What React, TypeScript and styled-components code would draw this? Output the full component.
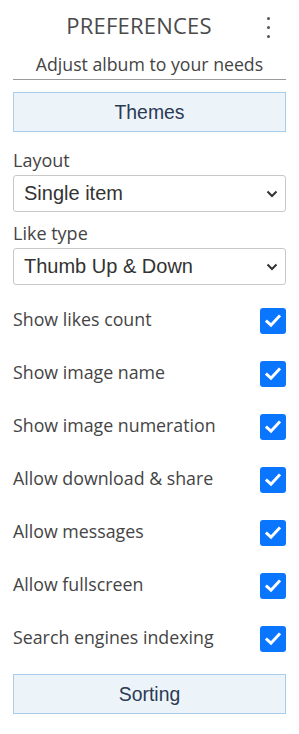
import React from 'react'
import styled, { createGlobalStyle } from 'styled-components'

const GlobalStyle = createGlobalStyle`
  body {
    margin: 0;
    background: #fff;
    font-family: "Source Sans Pro", "Open Sans", "Noto Sans", sans-serif;
  }
`

const options = [
  'Show likes count',
  'Show image name',
  'Show image numeration',
  'Allow download & share',
  'Allow messages',
  'Allow fullscreen',
  'Search engines indexing',
]

function App() {
  return (
    <>
      <GlobalStyle />
      <Panel>
        <Header>
          <Title>PREFERENCES</Title>
          <Kebab aria-label="menu">
            <Dot />
            <Dot />
            <Dot />
          </Kebab>
        </Header>
        <Subtitle>Adjust album to your needs</Subtitle>
        <SectionButton>Themes</SectionButton>

        <Field>
          <Label>Layout</Label>
          <SelectBox>
            <span>Single item</span>
            <Chevron />
          </SelectBox>
        </Field>
        <Field>
          <Label>Like type</Label>
          <SelectBox>
            <span>Thumb Up &amp; Down</span>
            <Chevron />
          </SelectBox>
        </Field>

        <Toggles>
          {options.map((o) => (
            <ToggleRow key={o}>
              <ToggleText>{o}</ToggleText>
              <Check>
                <svg width="16" height="14" viewBox="0 0 16 14">
                  <path d="M2 7.5 L6 11.2 L14 2.5" fill="none" stroke="#fff" strokeWidth="3" strokeLinecap="square" />
                </svg>
              </Check>
            </ToggleRow>
          ))}
        </Toggles>

        <SectionButton>Sorting</SectionButton>
      </Panel>
    </>
  )
}

const Chevron = () => (
  <svg width="12" height="8" viewBox="0 0 12 8">
    <path d="M1.5 1.5 L6 6 L10.5 1.5" fill="none" stroke="#333" strokeWidth="2" />
  </svg>
)

export default App

const Panel = styled.div`
  width: 273px;
  padding: 0 13px 20px;
  display: flex;
  flex-direction: column;
`

const Header = styled.div`
  position: relative;
  height: 50px;
  display: flex;
  align-items: center;
  justify-content: center;
`

const Title = styled.h1`
  margin: 0;
  margin-left: -21px;
  font-size: 22px;
  font-weight: 400;
  letter-spacing: 0.2px;
  color: #4a4a4a;
`

const Kebab = styled.div`
  position: absolute;
  right: 16px;
  top: 17px;
  display: flex;
  flex-direction: column;
  gap: 6px;
`

const Dot = styled.span`
  width: 3px;
  height: 3px;
  border-radius: 50%;
  background: #555;
`

const Subtitle = styled.div`
  text-align: center;
  font-size: 17.7px;
  line-height: 24px;
  color: #444;
  padding: 2px 0 3px;
  border-bottom: 1px solid #9a9a9a;
`

const SectionButton = styled.div`
  margin-top: 12px;
  height: 40px;
  box-sizing: border-box;
  display: flex;
  align-items: center;
  justify-content: center;
  background: #edf4f9;
  border: 1px solid #a9cdeb;
  font-family: "Liberation Sans", Arial, sans-serif;
  font-size: 19.4px;
  color: #2b3a55;
`

const Field = styled.div`
  display: flex;
  flex-direction: column;
  margin-top: 17px;
  & + & {
    margin-top: 10px;
  }
`

const Label = styled.div`
  font-size: 18px;
  color: #444;
  line-height: 22px;
  margin-bottom: 4px;
`

const SelectBox = styled.div`
  height: 37px;
  box-sizing: border-box;
  border: 1px solid #c8c8c8;
  border-radius: 3px;
  display: flex;
  align-items: center;
  justify-content: space-between;
  padding: 0 7px 0 10px;
  font-family: "Liberation Sans", Arial, sans-serif;
  font-size: 20px;
  color: #333;
`

const Toggles = styled.div`
  display: flex;
  flex-direction: column;
  margin-top: 22px;
`

const ToggleRow = styled.div`
  display: flex;
  align-items: center;
  justify-content: space-between;
  height: 27px;
  margin-bottom: 26px;
  &:last-child {
    margin-bottom: 10px;
  }
`

const ToggleText = styled.span`
  font-size: 17.8px;
  color: #444;
  margin-top: -4px;
`

const Check = styled.span`
  width: 26px;
  height: 26px;
  border-radius: 3px;
  background: #0a76ff;
  display: flex;
  align-items: center;
  justify-content: center;
`
